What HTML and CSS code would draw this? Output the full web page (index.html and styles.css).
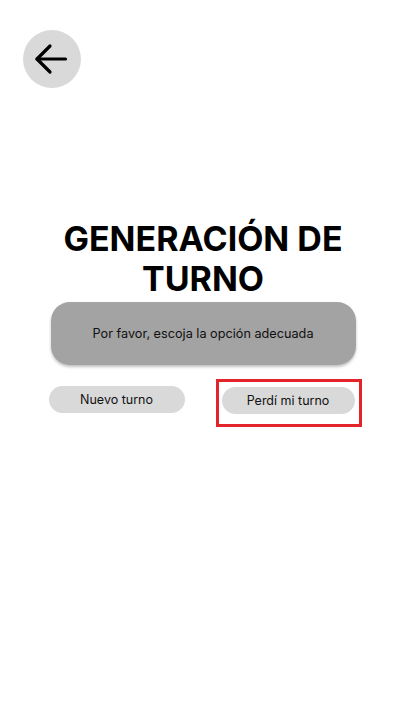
FILE: index.html
```html
<!DOCTYPE html>
<html lang="es">
<head>
<meta charset="utf-8">
<title>Generación de turno</title>
<link rel="stylesheet" href="styles.css">
</head>
<body>
<div class="screen">
  <header class="topbar">
    <button class="back" aria-label="Volver">
      <svg width="58" height="58" viewBox="0 0 58 58" fill="none" stroke="#000" stroke-width="3.2" stroke-linecap="round" stroke-linejoin="round">
        <path d="M42.5 29H14"/>
        <path d="M27 16L14 29L27 42"/>
      </svg>
    </button>
  </header>
  <main class="content">
    <h1 class="title">GENERACIÓN DE<br>TURNO</h1>
    <div class="notice">Por favor, escoja la opción adecuada</div>
    <div class="options">
      <button class="option">Nuevo turno</button>
      <div class="highlight">
        <button class="option">Perdí mi turno</button>
      </div>
    </div>
  </main>
</div>
</body>
</html>
```
FILE: styles.css
```css
* { box-sizing: border-box; }
html, body { margin: 0; padding: 0; background: #fff; }
body { font-family: Inter, "Noto Sans", sans-serif; color: #000; }
.screen { width: 405px; height: 724px; }
.topbar { padding: 30px 0 0 23px; }
.back {
  width: 58px; height: 58px; border-radius: 50%;
  background: #d9d9d9; border: none; padding: 0;
  display: block;
}
.back svg { display: block; }
.content { display: flex; flex-direction: column; align-items: center; padding-top: 131px; }
.title {
  margin: 0; font-size: 34px; font-weight: 700; line-height: 40px;
  text-align: center; letter-spacing: 0; margin-left: 1px;
}
.notice {
  margin-top: 3px; margin-left: 1px;
  width: 305px; height: 63px; border-radius: 19px;
  background: #a3a3a3;
  box-shadow: 0 2px 3px rgba(0,0,0,0.25);
  display: flex; align-items: center; justify-content: center;
  font-size: 12.7px; color: #111;
}
.options {
  width: 313px; margin-top: 14px; margin-left: 5px;
  display: flex; justify-content: space-between; align-items: flex-start;
}
.option {
  height: 27px; border-radius: 14px; border: none;
  background: #d9d9d9; font-family: inherit; font-size: 12.5px; color: #111;
  padding: 0;
}
.options > .option { width: 136px; margin-top: 7px; }
.highlight {
  border: 3px solid #e3242b; padding: 5px 4px 10px 3px;
}
.highlight .option { width: 133px; display: block; }
```
